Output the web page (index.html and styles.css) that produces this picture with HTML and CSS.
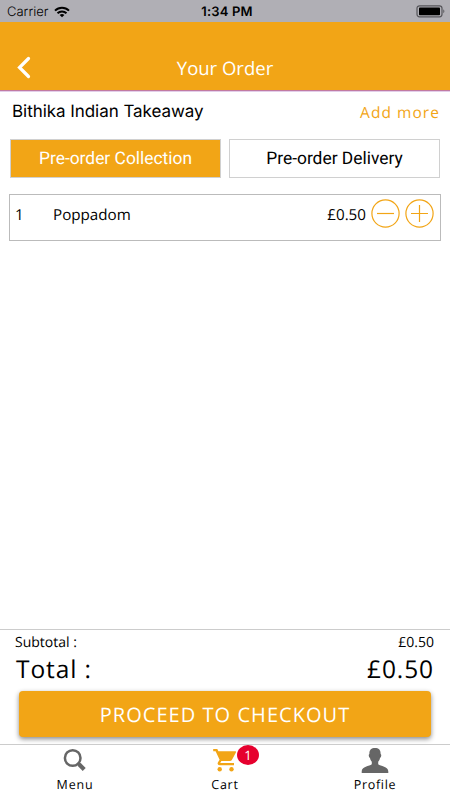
FILE: index.html
```html
<!DOCTYPE html>
<html lang="en">
<head>
<meta charset="utf-8">
<title>Your Order</title>
<link rel="stylesheet" href="styles.css">
</head>
<body>
<div class="app">
  <div class="status">
    <div class="status-left">
      <span class="carrier">Carrier</span>
      <svg class="wifi" width="16" height="12" viewBox="0 0 16 12" fill="none" stroke="#000" stroke-width="2"><path d="M1 4.600C5 .7 11 .7 15 4.600M3.500 7.200C6 4.800 10 4.800 12.500 7.200"/><path d="M8 11.300L5.600 8.900Q8 7.100 10.400 8.900Z" fill="#000" stroke="none"/></svg>
    </div>
    <span class="clock">1:34 PM</span>
    <svg class="battery" width="30" height="13" viewBox="0 0 30 13"><rect x="1" y=".8" width="25" height="11" rx="2.500" fill="none" stroke="#55555a" stroke-width="1.200"/><rect x="3" y="2.500" width="21" height="7.800" rx=".8"/><path d="M27.300 4.200q2.200 2 0 4z" fill="#55555a"/></svg>
  </div>
  <header class="header">
    <svg class="back" width="16" height="24" viewBox="0 0 16 24" fill="none" stroke="#fff" stroke-width="3.200" stroke-linecap="round" stroke-linejoin="miter"><path d="M12.500 2.500L3.500 11.500L12.500 20.500"/></svg>
    <h1 class="title">Your Order</h1>
  </header>
  <main class="main">
    <div class="shop"><span class="shop-name">Bithika Indian Takeaway</span><span class="add">Add more</span></div>
    <div class="tabs">
      <div class="tab active"><span>Pre-order Collection</span></div>
      <div class="tab"><span>Pre-order Delivery</span></div>
    </div>
    <div class="item">
      <span class="qty">1</span><span class="name">Poppadom</span><span class="price">£0.50</span>
      <svg class="round" width="29" height="29" viewBox="0 0 29 29"><circle cx="14.500" cy="14.500" r="13.600"/><path d="M6 14.500H23"/></svg>
      <svg class="round plus" width="29" height="29" viewBox="0 0 29 29"><circle cx="14.500" cy="14.500" r="13.600"/><path d="M6 14.500H23M14.500 6V23"/></svg>
    </div>
  </main>
  <section class="summary">
    <div class="sub"><span>Subtotal :</span><span class="sub-price">£0.50</span></div>
    <div class="total"><span>Total :</span><span class="total-price">£0.50</span></div>
    <div class="checkout"><span>PROCEED TO CHECKOUT</span></div>
  </section>
  <nav class="nav">
    <div class="nav-item">
      <svg width="30" height="28" viewBox="0 0 30 28" fill="none" stroke="#666"><circle cx="12.700" cy="13" r="7.800" stroke-width="2.500"/><path d="M17.600 17.600l2 2" stroke-width="2.500"/><path d="M19 19.200l5.200 5.200" stroke-width="4.200" stroke-linecap="butt"/></svg>
      <span class="label menu">Menu</span>
    </div>
    <div class="nav-item">
      <svg width="30" height="28" viewBox="0 0 30 28" fill="#f2a516"><path d="M3.200 4H7.300L8.400 6.200H25.400Q26.400 6.200 25.900 7.400L22 14.700Q21.300 16 19.800 16H11.400L10.200 18H24V20.300H9.700Q6.700 20.100 8 17.300L9.600 14.700L5.600 6.200H3.200Z"/><circle cx="9.700" cy="24.200" r="2.200"/><circle cx="21.500" cy="24.200" r="2.200"/></svg>
      <span class="badge">1</span>
      <span class="label cart">Cart</span>
    </div>
    <div class="nav-item">
      <svg width="30" height="28" viewBox="0 0 30 28" fill="#666"><path d="M15 3C18.800 3 20.800 5 20.600 9C21.800 9.300 21.200 12.600 20 13C19.700 15 18.900 16 18.200 16.700V19.300C20.500 21.300 28.300 21.500 28.300 26.500V28H1.700V26.500C1.700 21.500 9.500 21.300 11.800 19.300V16.700C11.100 16 10.300 15 10 13C8.800 12.600 8.200 9.300 9.400 9C9.200 5 11.200 3 15 3Z"/></svg>
      <span class="label profile">Profile</span>
    </div>
  </nav>
</div>
</body>
</html>
```
FILE: styles.css
```css
* { box-sizing: border-box; }
body { margin: 0; background: #fff; color: #000; font-family: "Open Sans", "Noto Sans", sans-serif; text-rendering: geometricPrecision; }
.app { width: 450px; height: 800px; display: flex; flex-direction: column; overflow: hidden; white-space: nowrap; }
.status { height: 22px; flex: none; background: #b0afb5; display: grid; grid-template-columns: 1fr auto 1fr; align-items: center; padding: 0 4px 0 7px; font: 13px/22px Inter, sans-serif; }
.status-left { display: flex; align-items: center; gap: 6px; }
.carrier { font-weight: 300; }
.clock { font-weight: 600; letter-spacing: 0.15px; padding: 1px 0 0 1px; }
.battery { justify-self: end; }
.header { height: 69px; flex: none; background: #f2a516; border-bottom: 1px solid #c17ba2; box-shadow: 0 1px #e3ceea; padding: 34px 16px 0; display: grid; grid-template-columns: 16px 1fr 16px; }
.back { display: block; }
.title { margin: 0; font-size: 18.5px; line-height: 25px; font-weight: 400; color: #fff; text-align: center; letter-spacing: 0; }
.main { flex: 1; padding: 0 9px; }
.shop { height: 48px; display: flex; justify-content: space-between; padding: 8px 1px 0 3px; line-height: 27px; }
.shop-name { font-family: Inter, sans-serif; font-size: 17px; letter-spacing: -0.05px; }
.add { color: #f2a516; font-size: 15.5px; letter-spacing: 1.05px; }
.tabs { display: flex; gap: 8px; padding: 0 1px; }
.tab { flex: 1; height: 39px; border: 1px solid #d0d0d0; font: 17.4px/38px Roboto, sans-serif; text-align: center; }
.active { background: #f2a516; color: #fff; }
.item { margin-top: 16px; height: 47px; border: 1px solid #bbb; display: flex; padding: 4px 6px 4px 5px; font-size: 15.2px; line-height: 33px; }
.qty { width: 38px; }
.name { flex: 1; }
.price { margin-right: 5px; }
.round { fill: none; stroke: #f2a516; stroke-width: 1.2; }
.plus { margin-left: 5px; }
.summary { height: 115px; flex: none; border-top: 1px solid #ccc; }
.sub, .total { display: flex; justify-content: space-between; padding: 0 16px 0 15px; }
.sub { height: 24px; line-height: 25px; font-size: 14px; }
.total { height: 29px; line-height: 31px; padding-left: 16px; font-size: 24.5px; letter-spacing: 0.9px; }
.checkout { margin: 8px 19px 0; height: 46px; border-radius: 4px; background: #f2a516; color: #fff; box-shadow: 0 2px 5px #0007; text-align: center; font-size: 20px; line-height: 47px; letter-spacing: 1.05px; }
.nav { height: 56px; flex: none; border-top: 1px solid #ccc; display: grid; grid-template-columns: repeat(3, 1fr); }
.nav-item { position: relative; display: flex; flex-direction: column; align-items: center; }
.label { font-size: 12.5px; line-height: 16px; margin-top: 4px; letter-spacing: 0.8px; }
.profile { letter-spacing: 0.7px; }
.badge { position: absolute; left: 87px; top: 0; width: 22px; height: 20px; border-radius: 50%; background: #e6002e; color: #fff; font-size: 13px; line-height: 20px; text-align: center; }
```
